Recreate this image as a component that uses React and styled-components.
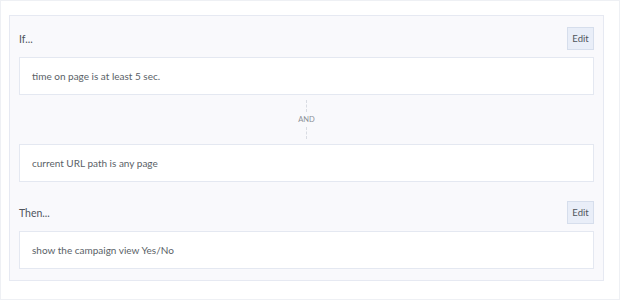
import React from "react";
import styled, { createGlobalStyle } from "styled-components";

const GlobalStyle = createGlobalStyle`
  html, body {
    margin: 0;
    padding: 0;
    background: #ffffff;
  }
  * {
    box-sizing: border-box;
  }
`;

const Frame = styled.div`
  width: 620px;
  height: 300px;
  border: 1px solid #eef0f4;
  padding: 14px 15px 0 8px;
  background: #ffffff;
  font-family: "Lato", "Open Sans", sans-serif;
  color: #555a63;
`;

const Panel = styled.div`
  width: 595px;
  background: #f9f9fc;
  border: 1px solid #e6e9f2;
  padding: 11px 9px 11px 9px;
  display: flex;
  flex-direction: column;
`;

const Section = styled.div`
  display: flex;
  flex-direction: column;
  margin-top: ${(p) => (p.$first ? "0" : "19px")};
`;

const Header = styled.div`
  height: 23px;
  margin-bottom: 7px;
  display: flex;
  align-items: center;
  justify-content: space-between;
`;

const Label = styled.span`
  font-size: 10.5px;
  color: #4f545c;
`;

const EditButton = styled.button`
  height: 23px;
  width: 27px;
  padding: 0;
  border: 1px solid #d6deec;
  background: #e9eef8;
  color: #4f545c;
  font-family: inherit;
  font-size: 9.5px;
  cursor: pointer;
`;

const Rule = styled.div`
  height: 38px;
  background: #ffffff;
  border: 1px solid #e4e8f1;
  display: flex;
  align-items: center;
  padding-left: 12px;
  font-size: 10px;
  color: #5a5f67;
`;

const Connector = styled.div`
  height: 49px;
  display: flex;
  flex-direction: column;
  align-items: center;
  justify-content: center;
  gap: 3px;
`;

const Dash = styled.div`
  width: 0;
  height: 12px;
  border-left: 1px dashed #d9dce3;
`;

const Join = styled.span`
  font-size: 7.5px;
  color: #8a8f97;
`;

const App = () => {
  return (
    <>
      <GlobalStyle />
      <Frame>
        <Panel>
          <Section $first>
            <Header>
              <Label>If...</Label>
              <EditButton>Edit</EditButton>
            </Header>
            <Rule>time on page is at least 5 sec.</Rule>
            <Connector>
              <Dash />
              <Join>AND</Join>
              <Dash />
            </Connector>
            <Rule>current URL path is any page</Rule>
          </Section>
          <Section>
            <Header>
              <Label>Then...</Label>
              <EditButton>Edit</EditButton>
            </Header>
            <Rule>show the campaign view Yes/No</Rule>
          </Section>
        </Panel>
      </Frame>
    </>
  );
};

export default App;
